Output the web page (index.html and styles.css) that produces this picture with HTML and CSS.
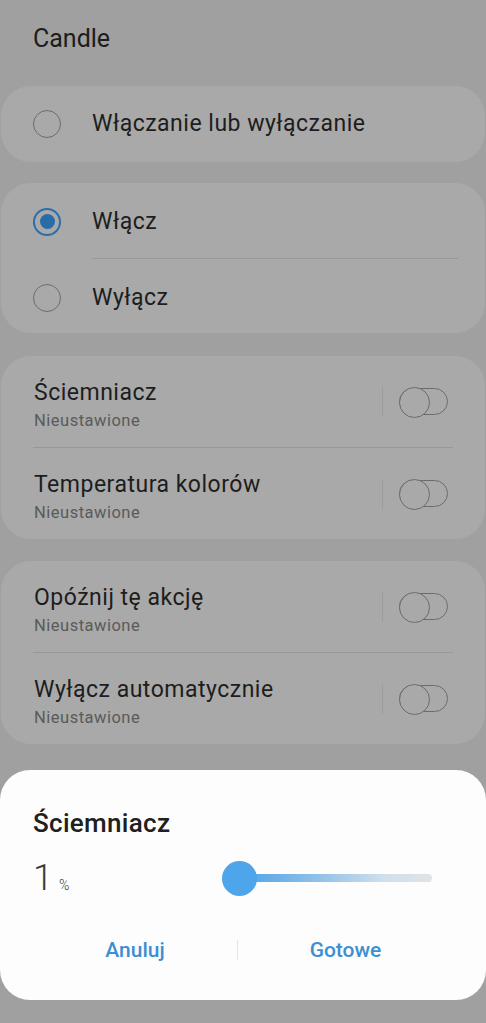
FILE: index.html
```html
<!DOCTYPE html>
<html lang="pl">
<head>
    <meta charset="UTF-8">
    <title>Candle</title>

    <link rel="stylesheet" href="styles.css">
</head>

<body>

    <div class="page">

        <div class="header">Candle</div>

        <!-- tryb -->
        <div class="card card-mode">
            <div class="radio-row">
                <span class="radio"></span>
                <span class="label">Włączanie lub wyłączanie</span>
            </div>
        </div>

        <div class="card card-onoff">
            <div class="radio-row">
                <span class="radio on"></span>
                <span class="label">Włącz</span>
            </div>
            <div class="line radio-line"></div>
            <div class="radio-row short">
                <span class="radio"></span>
                <span class="label">Wyłącz</span>
            </div>
        </div>

        <!-- ustawienia -->
        <div class="card card-light">
            <div class="switch-row">
                <div class="text">
                    <div class="title">Ściemniacz</div>
                    <div class="sub">Nieustawione</div>
                </div>
                <span class="bar"></span>
                <span class="switch"></span>
            </div>
            <div class="line"></div>
            <div class="switch-row">
                <div class="text">
                    <div class="title">Temperatura kolorów</div>
                    <div class="sub">Nieustawione</div>
                </div>
                <span class="bar"></span>
                <span class="switch"></span>
            </div>
        </div>

        <div class="card">
            <div class="switch-row">
                <div class="text">
                    <div class="title">Opóźnij tę akcję</div>
                    <div class="sub">Nieustawione</div>
                </div>
                <span class="bar"></span>
                <span class="switch"></span>
            </div>
            <div class="line"></div>
            <div class="switch-row">
                <div class="text">
                    <div class="title">Wyłącz automatycznie</div>
                    <div class="sub">Nieustawione</div>
                </div>
                <span class="bar"></span>
                <span class="switch"></span>
            </div>
        </div>

    </div>

    <!-- okno ściemniacza -->
    <div class="dialog">
        <div class="dialog-title">Ściemniacz</div>

        <div class="value-row">
            <div class="num">1<span class="pct">%</span></div>
            <div class="slider">
                <span class="track"></span>
                <span class="thumb"></span>
            </div>
        </div>

        <div class="buttons">
            <span class="btn">Anuluj</span>
            <span class="btn-sep"></span>
            <span class="btn">Gotowe</span>
        </div>
    </div>

</body>
</html>
```

FILE: styles.css
```css
* {
    margin: 0px;
    padding: 0px;
    box-sizing: border-box;
}

body {
    background-color: #a0a0a0;
    font-family: Roboto, "Noto Sans", "Liberation Sans", sans-serif;
    color: #1d1d1d;
    width: 486px;
    height: 1023px;
    overflow: hidden;
}

.page {
    display: flex;
    flex-direction: column;
}

.header {
    font-size: 25px;
    line-height: 30px;
    padding: 24px 0 0 33px;
    height: 86px;
}

.card {
    background-color: #a9a9a9;
    border-radius: 30px;
    margin: 0 1px 22px 1px;
}

.card-mode {
    margin-bottom: 21px;
}

.card-onoff {
    margin-bottom: 23px;
}

/* radio */

.radio-row {
    display: flex;
    align-items: center;
    height: 76px;
    padding-left: 32px;
}

.card-onoff .radio-row {
    height: 75px;
    padding-top: 2px;
}

.card-onoff .radio-row.short {
    height: 74px;
    padding-top: 3px;
}

.radio {
    width: 28px;
    height: 28px;
    border: 1.5px solid #6c6c6c;
    border-radius: 50%;
    margin-right: 31px;
    display: flex;
    align-items: center;
    justify-content: center;
}

.radio.on {
    border: 2px solid #2c6fa8;
}

.radio.on::before {
    content: "";
    width: 15px;
    height: 15px;
    border-radius: 50%;
    background-color: #2a6ca6;
}

.label {
    font-size: 23px;
    line-height: 26px;
    letter-spacing: 0.5px;
}

.line {
    height: 1px;
    background-color: #989898;
    margin: 0 32px 0 32px;
}

.radio-line {
    margin-left: 91px;
    margin-right: 27px;
}

/* przełączniki */

.switch-row {
    display: flex;
    align-items: center;
    height: 91px;
    padding: 0 37px 0 33px;
}

.text {
    flex: 1;
    padding-top: 7px;
}

.title {
    font-size: 23px;
    line-height: 26px;
    letter-spacing: 0.5px;
}

.sub {
    font-size: 16.5px;
    line-height: 20px;
    margin-top: 5px;
    letter-spacing: 0.5px;
    color: #5a5a5a;
}

.bar {
    width: 1px;
    height: 30px;
    background-color: #9c9c9c;
    margin-right: 16px;
}

.switch {
    position: relative;
    width: 49px;
    height: 27px;
    border: 1.5px solid #6c6c6c;
    border-radius: 14px;
}

.switch::before {
    content: "";
    position: absolute;
    left: -1.5px;
    top: -2.5px;
    width: 29px;
    height: 29px;
    border: 1.5px solid #6c6c6c;
    border-radius: 50%;
    background-color: #a9a9a9;
}

/* dialog */

.dialog {
    position: fixed;
    left: 0px;
    right: 0px;
    top: 770px;
    height: 230px;
    background-color: #fdfdfd;
    border-radius: 30px;
    padding: 38px 33px 0 33px;
}

.dialog-title {
    font-size: 26px;
    line-height: 30px;
    font-weight: 500;
    letter-spacing: 0.3px;
    color: #202020;
}

.value-row {
    display: flex;
    align-items: center;
    height: 50px;
    margin-top: 15px;
}

.num {
    font-size: 36px;
    line-height: 36px;
    font-weight: 300;
    color: #3a3a3a;
    margin-top: 6px;
}

.pct {
    font-size: 14px;
    margin-left: 6px;
}

.slider {
    position: relative;
    width: 210px;
    height: 35px;
    margin-left: auto;
    margin-right: 21px;
}

.track {
    position: absolute;
    left: 17px;
    right: 0px;
    top: 13.5px;
    height: 8px;
    border-radius: 4px;
    background: linear-gradient(to right, #4ea3e6 0%, #8fc0e8 40%, #d0dfeb 75%, #e2e3e5 100%);
}

.thumb {
    position: absolute;
    left: 0px;
    top: 0px;
    width: 35px;
    height: 35px;
    border-radius: 50%;
    background-color: #4ea5eb;
}

.buttons {
    display: grid;
    grid-template-columns: 204px 1px 1fr;
    align-items: center;
    height: 50px;
    margin-top: 22px;
}

.btn {
    text-align: center;
    font-size: 21px;
    line-height: 25px;
    font-weight: 500;
    color: #3d8fd1;
}

.btn-sep {
    height: 20px;
    background-color: #e4e4e4;
}
```
